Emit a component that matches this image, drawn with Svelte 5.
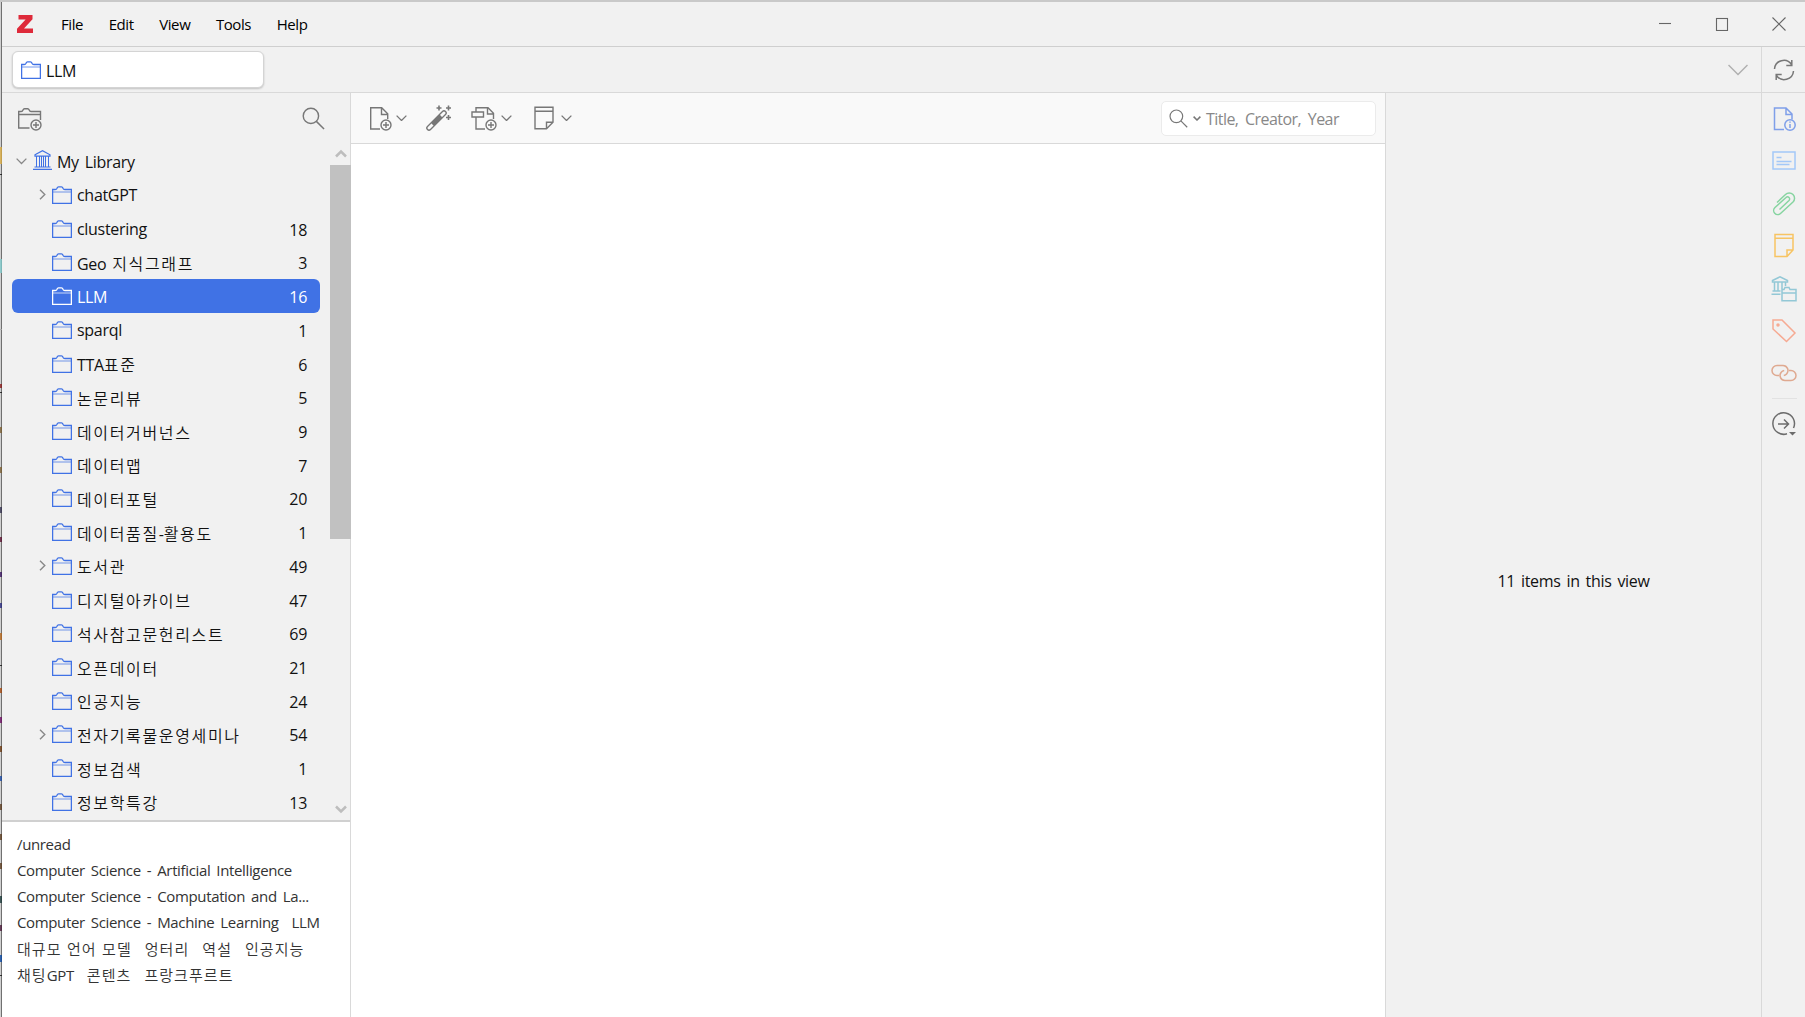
<script>
	const menus = ["File", "Edit", "View", "Tools", "Help"];
	const collections = [
		{ name: "chatGPT", count: "", parent: true },
		{ name: "clustering", count: 18 },
		{ name: "Geo 지식그래프", count: 3 },
		{ name: "LLM", count: 16 },
		{ name: "sparql", count: 1 },
		{ name: "TTA표준", count: 6 },
		{ name: "논문리뷰", count: 5 },
		{ name: "데이터거버넌스", count: 9 },
		{ name: "데이터맵", count: 7 },
		{ name: "데이터포털", count: 20 },
		{ name: "데이터품질-활용도", count: 1 },
		{ name: "도서관", count: 49, parent: true },
		{ name: "디지털아카이브", count: 47 },
		{ name: "석사참고문헌리스트", count: 69 },
		{ name: "오픈데이터", count: 21 },
		{ name: "인공지능", count: 24 },
		{ name: "전자기록물운영세미나", count: 54, parent: true },
		{ name: "정보검색", count: 1 },
		{ name: "정보학특강", count: 13 },
	];
	const tagRows = [
		["/unread"],
		["Computer Science - Artificial Intelligence"],
		["Computer Science - Computation and La..."],
		["Computer Science - Machine Learning", "LLM"],
		["대규모 언어 모델", "엉터리", "역설", "인공지능"],
		["채팅GPT", "콘텐츠", "프랑크푸르트"],
	];
	// bits of the window behind, seen along the left edge: [top, height, color]
	const behind = [
		[147, 17, "#d9ab42"],
		[174, 1, "#111"],
		[259, 14, "#7fc9ca"],
		[329, 1, "#aaa"],
		[384, 4, "#8a1c1c"],
		[392, 1, "#111"],
		[427, 6, "#7a5f33"],
		[467, 6, "#7a5f33"],
		[507, 6, "#35324f"],
		[537, 5, "#5b1230"],
		[572, 5, "#3a1560"],
		[603, 5, "#2a2c80"],
		[633, 7, "#b5661c"],
		[665, 1, "#111"],
		[688, 5, "#a2480f"],
		[717, 6, "#6d0e63"],
		[746, 6, "#6b3a12"],
		[776, 5, "#1b4aa0"],
		[804, 6, "#5c3d22"],
		[834, 6, "#5c3d22"],
		[863, 6, "#5c3d22"],
		[896, 7, "#1c3a3a"],
		[925, 6, "#4a1c3a"],
		[955, 7, "#0a47a0"],
		[975, 1, "#111"],
	];
	let selected = $state("LLM");

	// hangul and latin runs get their own spacing
	function runs(text) {
		return text.match(/[가-힣]+(?: [가-힣]+)*|[^가-힣]+/g).map((t) => ({
			text: t,
			ko: /[가-힣]/.test(t),
		}));
	}
</script>

{#snippet label(text)}{#each runs(text) as run}<span class={run.ko ? "ko" : "en"}>{run.text}</span>{/each}{/snippet}

{#snippet folder()}
	<svg class="folder" width="20" height="18" viewBox="0 0 20 18" fill="none" stroke="currentColor">
		<path d="M.6 17.300V3.500h2.600Q4.500 3.500 5 2.200 5.500 .8 6.500 .8h3Q10.500 .8 11 2.200 11.500 3.500 12.800 3.500h6.600v13.800z" stroke-width="1.300" />
		<path d="M1 6h18" stroke-width="1.200" opacity=".6" />
	</svg>
{/snippet}

{#snippet chevron(w, h)}
	<svg width={w} height={h} viewBox="0 0 10 6" fill="none" stroke="currentColor" stroke-width="1.200">
		<path d="M.5 .6 5 5.100 9.500 .6" />
	</svg>
{/snippet}

{#snippet plus()}
	<circle cx="17" cy="19" r="5" />
	<path d="M17 16v6M14 19h6" />
{/snippet}

{#snippet magnifier(size)}
	<svg width={size} height={size} viewBox="0 0 24 24" fill="none" stroke="currentColor" stroke-width="1.500">
		<circle cx="9.300" cy="9.300" r="8" />
		<path d="M15 15l8 8" />
	</svg>
{/snippet}

<div class="screen">
	<div class="edge">
		{#each behind as [top, height, color]}
			<i style="top: {top - 2}px; height: {height}px; background: {color}"></i>
		{/each}
	</div>
	<div class="window">
		<header class="titlebar">
			<svg class="logo" width="17" height="18" viewBox="0 0 17 18">
				<path d="M1.500 0h14v4.200L7 13.500h9V18H0v-4.200L8.600 4.500H1.500z" fill="#de2a3a" />
			</svg>
			<nav>
				{#each menus as menu}
					<span>{menu}</span>
				{/each}
			</nav>
			<svg class="controls" width="128" height="14" viewBox="0 0 128 14" fill="none" stroke="#666" stroke-width="1.100">
				<path d="M0 6.500h12" />
				<rect x="57.500" y="1.500" width="11" height="12" />
				<path d="M113.500 .5l13 13M126.500 .5l-13 13" />
			</svg>
		</header>

		<div class="tabs">
			<div class="tab">{@render folder()}<span>LLM</span></div>
			<span class="all-tabs">
				<svg width="20" height="12" viewBox="0 0 20 12" fill="none" stroke="currentColor" stroke-width="1.500"><path d="M.5 1l9.500 9.500L19.500 1" /></svg>
			</span>
			<div class="sync">
				<svg width="22" height="22" viewBox="0 0 22 22" fill="none" stroke="#777" stroke-width="1.500">
					<path d="M1.500 10A9.300 9.300 0 0 1 18.500 5.500M18.800 1v5.500h-5.500" />
					<path d="M20.500 12A9.300 9.300 0 0 1 3.500 16.500M3.200 21v-5.500h5.500" />
				</svg>
			</div>
		</div>

		<main>
			<aside class="sidebar">
				<div class="sidebar-bar">
					<svg width="25" height="24" viewBox="0 0 25 24" fill="none" stroke="currentColor" stroke-width="1.400">
						<path d="M12.500 21H1.700V4.500h2.500Q5.500 4.500 6 3 6.500 1.700 7.500 1.700h3.200Q11.700 1.700 12.200 3 12.700 4.500 14 4.500h9.500V13M1.500 7.500h22" />
						<circle cx="19" cy="18" r="5" />
						<path d="M19 15v6M16 18h6" />
					</svg>
					{@render magnifier(23)}
				</div>
				<div class="tree-wrap">
					<div class="tree">
						<div class="row root">
							<span class="twisty">{@render chevron(11, 6.5)}</span>
							<svg class="library" width="19" height="20" viewBox="0 0 19 20" fill="none" stroke="currentColor">
								<path d="M2 4.800 9.500 .8 17 4.800v1.400H2zM1.500 17h16M0 19.300h19" stroke-width="1.200" />
								<path d="M3.500 6v11M6.500 6v11M8.500 6v11M10.500 6v11M12.500 6v11M15.500 6v11" />
							</svg>
							<span class="name">{@render label("My Library")}</span>
						</div>
						{#each collections as item (item.name)}
							<!-- svelte-ignore a11y_click_events_have_key_events, a11y_no_static_element_interactions -->
							<div class="row" class:selected={item.name === selected} onclick={() => (selected = item.name)}>
								<span class="twisty">
									{#if item.parent}
										<svg width="7" height="11" viewBox="0 0 7 11" fill="none" stroke="currentColor" stroke-width="1.400">
											<path d="M1 .7l4.800 4.800L1 10.300" />
										</svg>
									{/if}
								</span>
								{@render folder()}
								<span class="name">{@render label(item.name)}</span>
								<span class="count">{item.count}</span>
							</div>
						{/each}
					</div>
					<div class="scrollbar">
						<svg width="12" height="9" viewBox="0 0 12 9" fill="none" stroke="#bdbdbd" stroke-width="2.500"><path d="M1 7.500l5-5 5 5" /></svg>
						<div class="thumb"></div>
						<svg width="12" height="9" viewBox="0 0 12 9" fill="none" stroke="#bdbdbd" stroke-width="2.500"><path d="M1 1.500l5 5 5-5" /></svg>
					</div>
				</div>
				<div class="tags">
					{#each tagRows as row}
						<div class="tag-row">
							{#each row as tag}
								<span>{@render label(tag)}</span>
							{/each}
						</div>
					{/each}
				</div>
			</aside>

			<section class="items">
				<div class="toolbar">
					<span class="tool new-item">
						<svg width="23" height="25" viewBox="0 0 23 25" fill="none" stroke="currentColor" stroke-width="1.400">
							<path d="M11 23H1.700V1.700h11l6 6V13M12.500 2v6.500h6" />
							{@render plus()}
						</svg>
						{@render chevron(11, 6.5)}
					</span>
					<span class="tool wand">
						<svg width="26" height="26" viewBox="0 0 26 26" fill="none" stroke="currentColor" stroke-width="1.400">
							<path d="M1.500 21.500 16.500 6.500a1.900 1.900 0 0 1 3 3L4.500 24.500a1.900 1.900 0 0 1-3-3z" />
							<path d="M6.500 19.500 15 11" stroke-width="4" />
							<path d="M13 .5v5M10.500 3h5M22.500 .5v5M20 3h5M22.500 10v5M20 12.500h5" stroke-width="1.600" />
						</svg>
					</span>
					<span class="tool attach">
						<svg width="26" height="25" viewBox="0 0 26 25" fill="none" stroke="currentColor" stroke-width="1.400">
							<path d="M1 6h11.500v5H1zM5 6V1.700h12l5.500 5.500V13M5 11v12h9M16.500 2v6h6" />
							<g transform="translate(3 0)">{@render plus()}</g>
						</svg>
						{@render chevron(11, 6.5)}
					</span>
					<span class="tool note">
						<svg width="20" height="24" viewBox="0 0 20 24" fill="none" stroke="currentColor" stroke-width="1.400">
							<path d="M1 1.200h18v15L12.500 22.800H1zM1 5.200h18M12.500 22.800v-6.500H19" />
						</svg>
						{@render chevron(11, 6.5)}
					</span>
					<div class="search">
						{@render magnifier(19)}
						<span class="scope">
							<svg width="8" height="5" viewBox="0 0 8 5" fill="none" stroke="currentColor" stroke-width="1.500"><path d="M.6 .6 4 4 7.400 .6" /></svg>
						</span>
						<span class="placeholder">Title, Creator, Year</span>
					</div>
				</div>
				<div class="list"></div>
			</section>

			<section class="pane"><span>11 items in this view</span></section>

			<aside class="sidenav">
				<svg width="26" height="26" viewBox="0 0 26 26" stroke="#7f9fe9">
					<path d="M13 23.500H3.500V2h11.500l6 6v5.500M15 2v6.500h6" />
					<circle cx="19" cy="19" r="5.200" />
					<path d="M19 18v4M19 15.500v1.300" />
				</svg>
				<svg width="26" height="26" viewBox="0 0 26 26" stroke="#a3c8f8">
					<rect x="2" y="4" width="22" height="17" />
					<path d="M5.500 9.500h5M5.500 13.500h15M5.500 16.500h13" />
				</svg>
				<svg width="26" height="26" viewBox="0 0 26 26" stroke="#86d4a0">
					<path d="M8.500 18.500 18 9.500a2.100 2.100 0 0 0-3-3L4 16.500a4 4 0 0 0 5.500 6L22 11a5.200 5.200 0 0 0-7.500-7.500L6 11.500" />
				</svg>
				<svg width="26" height="26" viewBox="0 0 26 26" stroke="#f7c463">
					<path d="M4 1.500h18V17l-6 6.500H4zM4 5.200h18M16 23.500V17h6" />
				</svg>
				<svg width="26" height="26" viewBox="0 0 26 26" stroke="#93c8d6">
					<path d="M1.500 4.500 9 .8 16.500 4.500V6h-15zM3.500 6v9M7 6v9M11 6v7M14.500 6v4M1.500 15h8M.5 18.300h9" />
					<path d="M11 24.800V13.500h2l1-2h4l1 2h6v11.300zM11 17h14" />
				</svg>
				<svg width="26" height="26" viewBox="0 0 26 26" stroke="#f6aa93">
					<path d="M2 2h9l13 13-8.500 8.500L2 11z" />
					<circle cx="7" cy="7" r="1" fill="#f6aa93" />
				</svg>
				<svg width="26" height="26" viewBox="0 0 26 26" stroke="#dfa990">
					<path d="M8 15.500H6a5 5 0 0 1 0-10h6a5 5 0 0 1 3.800 8.200c-.7.900-1.800 1.500-3 1.700" />
					<path d="M18 10.500h2a5 5 0 0 1 0 10h-6a5 5 0 0 1-3.800-8.200c.7-.9 1.800-1.500 3-1.700" />
				</svg>
				<hr />
				<svg class="locate" width="26" height="26" viewBox="0 0 26 26" stroke="#6c6c6c">
					<path d="M16 22.800A10.800 10.800 0 1 1 22.500 17M7 13h10.500M13 8.500l4.500 4.500-4.500 4.500" />
					<path d="M18 21h7l-3.500 3.500z" fill="#6c6c6c" stroke="none" />
				</svg>
			</aside>
		</main>
	</div>
</div>

<style>
	:global(body) {
		margin: 0;
	}
	.screen {
		display: flex;
		box-sizing: border-box;
		height: 1017px;
		border-top: 2px solid #c9c9c9;
		background: #f1f1f1;
		font-family: "Open Sans", "Noto Sans CJK KR", sans-serif;
		font-size: 16px;
		letter-spacing: -0.3px;
		word-spacing: 2px;
		color: #111;
		overflow: hidden;
	}
	.edge {
		position: relative;
		flex: none;
		width: 1px;
		border-right: 1px solid #707070;
		background: #d0d0d0;
	}
	.edge i {
		position: absolute;
		left: 0;
		width: 2px;
		opacity: .8;
	}
	.window {
		flex: 1;
		min-width: 0;
		display: flex;
		flex-direction: column;
	}
	.titlebar {
		flex: none;
		display: flex;
		align-items: center;
		box-sizing: border-box;
		height: 45px;
		padding: 0 18px 0 15px;
		border-bottom: 1px solid #cfcfcf;
	}
	nav {
		display: flex;
		gap: 25.500px;
		margin-left: 27px;
		font-size: 15px;
		letter-spacing: -0.4px;
		color: #000;
	}
	.controls {
		margin-left: auto;
	}
	.tabs {
		flex: none;
		display: flex;
		align-items: center;
		box-sizing: border-box;
		height: 46px;
		padding-left: 10px;
		border-bottom: 1px solid #d9d9d9;
	}
	.tab {
		display: flex;
		align-items: center;
		gap: 5px;
		box-sizing: border-box;
		width: 252px;
		height: 37px;
		padding-left: 8px;
		border: 1px solid #d4d4d4;
		border-radius: 6px;
		background: #fff;
		box-shadow: 0 1px 2px #0003;
	}
	.tab span {
		margin-top: 2px;
	}
	.folder {
		flex: none;
		color: #4072e5;
	}
	.all-tabs {
		display: flex;
		margin-left: auto;
		margin-right: 13px;
		color: #b0b0b0;
	}
	.sync {
		display: flex;
		align-items: center;
		justify-content: center;
		box-sizing: border-box;
		width: 44px;
		height: 45px;
		border-left: 1px solid #d9d9d9;
	}
	main {
		flex: 1;
		min-height: 0;
		display: flex;
	}
	.sidebar {
		flex: none;
		display: flex;
		flex-direction: column;
		width: 348px;
		border-right: 1px solid #d9d9d9;
	}
	.sidebar-bar {
		display: flex;
		justify-content: space-between;
		align-items: center;
		height: 51px;
		padding: 0 25px 0 15px;
		color: #777;
	}
	.tree-wrap {
		display: flex;
		height: 676px;
		border-bottom: 2px solid #d0d0d0;
	}
	.tree {
		width: 308px;
		padding-left: 10px;
	}
	.row {
		display: flex;
		align-items: center;
		height: 33.720px;
		border-radius: 6px;
		white-space: pre;
	}
	.root {
		margin-top: .4px;
	}
	.twisty {
		display: flex;
		justify-content: flex-end;
		width: 34px;
		margin-right: 6px;
		color: #888;
	}
	.root .twisty {
		width: 15px;
		margin-right: 6px;
	}
	.library {
		color: #4072e5;
		margin-top: -2px;
	}
	.name {
		margin-left: 5px;
		margin-top: 1px;
	}
	.count {
		margin-left: auto;
		margin-right: 12.500px;
		margin-top: 2px;
		letter-spacing: 0;
	}
	.selected {
		background: #4072e5;
		color: #fff;
	}
	.selected .folder {
		color: #fff;
	}
	.ko {
		font-family: "Noto Sans CJK KR", sans-serif;
		font-weight: 350;
		letter-spacing: 1.650px;
	}
	.scrollbar {
		display: flex;
		flex-direction: column;
		align-items: center;
		box-sizing: border-box;
		width: 21px;
		margin-left: auto;
		margin-right: -1px;
		padding: 5px 0 6px;
	}
	.thumb {
		width: 21px;
		height: 374px;
		margin: 7px 0 auto;
		background: #c1c1c1;
	}
	.tags {
		flex: 1;
		padding: 9px 15px;
		background: #fff;
		font-size: 15px;
		letter-spacing: -0.360px;
		word-spacing: 2.500px;
		color: #333;
	}
	.tag-row {
		display: flex;
		align-items: center;
		gap: 13px;
		height: 26.100px;
		white-space: pre;
	}
	.tags .ko {
		letter-spacing: 1.050px;
		word-spacing: 1px;
	}
	.items {
		flex: none;
		display: flex;
		flex-direction: column;
		width: 1034px;
		border-right: 1px solid #d9d9d9;
	}
	.toolbar {
		display: flex;
		align-items: center;
		box-sizing: border-box;
		height: 51px;
		padding: 0 9px 0 18px;
		border-bottom: 1px solid #d9d9d9;
		background: #f9f9f9;
		color: #777;
	}
	.tool {
		display: flex;
		align-items: center;
		gap: 4px;
	}
	.wand {
		margin-left: 19px;
	}
	.attach {
		margin-left: 19px;
	}
	.note {
		margin-left: 22px;
		gap: 7px;
	}
	.search {
		display: flex;
		align-items: center;
		box-sizing: border-box;
		width: 215px;
		height: 35px;
		margin-left: auto;
		padding-left: 7px;
		border: 1px solid #ebebeb;
		border-radius: 5px;
		background: #fff;
	}
	.scope {
		display: flex;
		margin: 0 5px;
	}
	.placeholder {
		margin-top: 2px;
		letter-spacing: -0.550px;
		word-spacing: 3px;
		color: #888;
		white-space: nowrap;
	}
	.list {
		flex: 1;
		background: #fff;
	}
	.pane {
		flex: 1;
		display: flex;
		align-items: center;
		justify-content: center;
		padding-top: 51px;
	}
	.sidenav {
		flex: none;
		display: flex;
		flex-direction: column;
		align-items: center;
		gap: 16.400px;
		box-sizing: border-box;
		width: 44px;
		padding: 13px 0 0 1px;
		border-left: 1px solid #d9d9d9;
	}
	.sidenav svg {
		flex: none;
		fill: none;
		stroke-width: 1.500;
	}
	hr {
		width: 25px;
		height: 1px;
		margin: -5px 0 -4px;
		border: 0;
		background: #e2e2e2;
	}
</style>
